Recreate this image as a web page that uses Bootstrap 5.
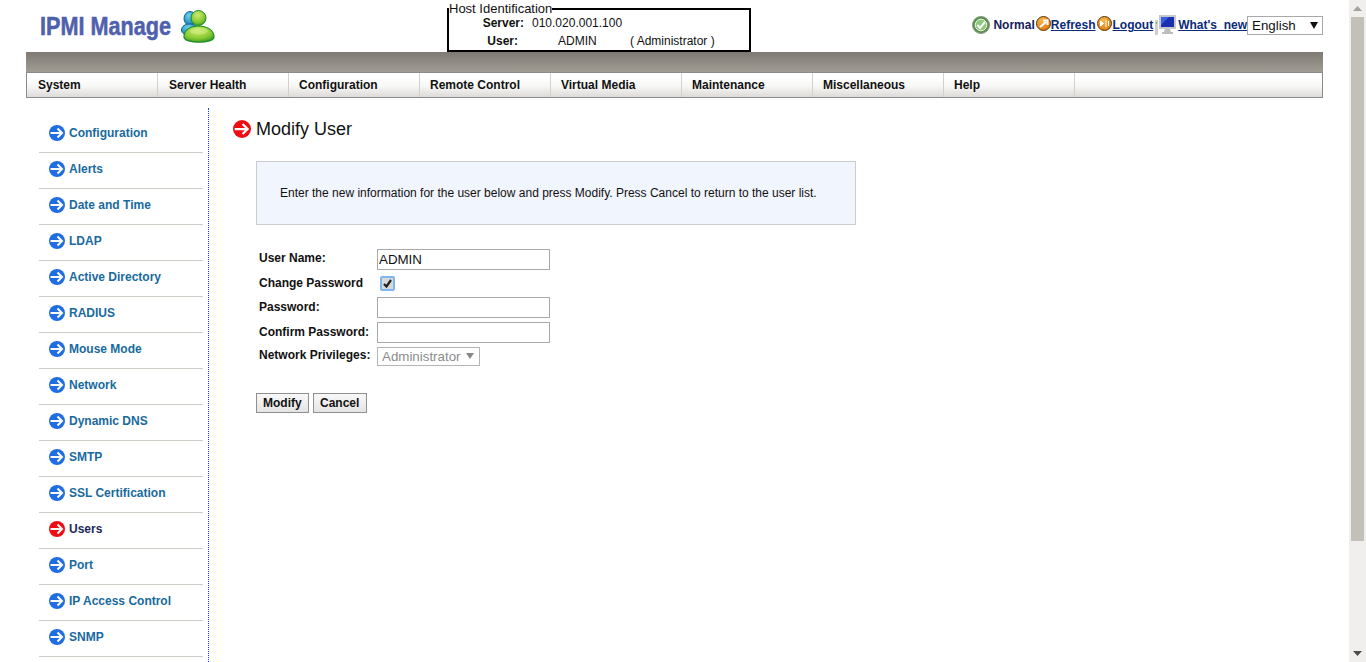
<!DOCTYPE html>
<html lang="en">
<head>
<meta charset="utf-8">
<title>IPMI Manage</title>
<link rel="stylesheet" href="https://cdn.jsdelivr.net/npm/bootstrap@5.3.0/dist/css/bootstrap.min.css">
<style>
html,body{height:100%;overflow:hidden}
body{font-family:"Liberation Sans",Arial,sans-serif;font-size:12px;color:#000;background:#fff}
.page-shell{height:662px;width:1366px}
.page-main{width:1349px;flex:none;overflow:hidden}
.fake-bar{width:17px;flex:none;background:#f0efed}
.bar-btn{height:17px;color:#a3a19b}
.bar-btn-down{color:#4d4d4d}
.bar-thumb{height:524px;width:13px;background:#c3c0b8;margin:0 auto}
.top-head{height:52px;padding-left:40px}
.brand-name{font-family:"Liberation Sans",Arial,sans-serif;font-weight:700;font-size:25px;color:#4f60ad;width:141px;white-space:nowrap;transform:scaleX(.865);transform-origin:left center;-webkit-text-stroke:.5px #4f60ad;margin-top:2px}
.brand-pic{width:34px;height:34px;margin-top:2px}
.host-box{width:304px;height:49px;margin:0 0 0 232px;padding:0;border:2px solid #000;min-width:0;align-self:flex-end}
.host-box legend{float:none;width:auto;margin:0;padding:0;font-size:13px;line-height:11px;color:#111}
.host-row{height:18px;line-height:18px;color:#111}
.host-k{font-weight:700;width:75px;text-align:right;flex:none}
.host-k-u{width:69px}
.host-v{margin-left:8px}
.host-u{margin-left:40px;width:72px;flex:none}
.tools{margin-left:auto;margin-right:26px;height:52px;padding-top:16px;font-weight:700;color:#14205c;white-space:nowrap}
.tools a{color:#0b2a78}
.tools svg{flex:none}
.tool-status{margin-right:3px}
.tool-ref{margin-left:1px}
.tool-out{margin-left:2px}
.tool-pc{margin:-1px 2px 0}
.lang-pick{appearance:none;width:76px;height:19px;border:1px solid #a9a9a9;background:#fff url("data:image/svg+xml,%3Csvg xmlns='http://www.w3.org/2000/svg' width='8' height='7'%3E%3Cpath d='M0 0h8L4 7z' fill='%23111'/%3E%3C/svg%3E") no-repeat 62px 5px;font:13.33px "Liberation Sans",Arial,sans-serif;padding:0 0 0 4px;color:#111;border-radius:0}
.band{height:20px;margin:0 0 0 26px;width:1297px;background:linear-gradient(#7e7a73,#a09d95)}
.menu-strip{height:26px;margin-left:26px;width:1297px;border:1px solid #8b8b8b;background:linear-gradient(#fff 20%,#f7f7f6 55%,#dcdbd8)}
.menu-strip .nav-link{width:131px;height:24px;padding:0 0 0 10px;line-height:24px;font-weight:700;color:#111;border-right:1px solid #d3d1cc;flex:none;font-size:12px}
.menu-strip .nav-link:nth-child(-n+2){padding-left:11px}
.content-row{height:564px}
.side-col{width:209px;flex:none;margin-top:10px;padding:9px 5px 0 39px;border-right:1px dotted #1a3cf0;height:554px;overflow:hidden}
.side-item{height:36px;width:164px;border-bottom:1px solid #cfccc6;padding-left:10px;font-weight:700;color:#186a9e;gap:4px;padding-bottom:4px}
.side-item.is-on{color:#1b2a58}
.main-col{padding:21px 0 0 24px}
.page-title{font-size:18px;font-weight:400;line-height:20px;margin:0;color:#111;gap:5px}
.note-box{margin:22px 0 0 23px;width:600px;height:64px;background:#f1f5fd;border:1px solid #ccc;padding-left:23px;color:#111}
.form-wrap{margin:22px 0 0 23px}
.f-row{height:24.5px;padding-left:3px}
.f-label{width:118px;flex:none;font-weight:700;color:#111;margin:0;padding-bottom:2px}
.f-input{width:173px;height:21px;border:1px solid #a9a9a9;padding:0 1px;font:13.33px "Liberation Sans",Arial,sans-serif;color:#111;border-radius:0;background:#fff}
.f-input-up{margin-bottom:2px}
.f-check{appearance:none;width:15px;height:15px;margin:0 0 1px 3px;border:2px solid #7fb6ee;border-radius:2px;background:#d8d8d8 url("data:image/svg+xml,%3Csvg xmlns='http://www.w3.org/2000/svg' width='11' height='11'%3E%3Cpath d='M2 6l2.500 2.500L9 2' fill='none' stroke='%23222' stroke-width='2.200'/%3E%3C/svg%3E") no-repeat center}
.f-drop{appearance:none;width:103px;height:19px;margin-bottom:2px;border:1px solid #b4b4b4;background:#fff url("data:image/svg+xml,%3Csvg xmlns='http://www.w3.org/2000/svg' width='8' height='6'%3E%3Cpath d='M0 0h8L4 6z' fill='%23888'/%3E%3C/svg%3E") no-repeat 88px 5px;font:13.33px "Liberation Sans",Arial,sans-serif;color:#8c8c8c;padding:0 0 0 4px;border-radius:0;opacity:1}
.f-row-last .f-label{padding-bottom:4px}
.act-row{margin-top:23px;gap:4px}
.act-btn{height:20px;padding:0 6px;font-weight:700;font-size:12px;line-height:18px;color:#111;border:1px solid #8f8f8f;border-radius:0;background:linear-gradient(#f8f8f8,#e4e4e4)}
.act-btn-wide{width:54px}
</style>
</head>
<body>
<svg width="0" height="0" class="d-block" aria-hidden="true">
  <defs>
    <symbol id="go-blue" viewBox="0 0 16 16"><circle cx="8" cy="8" r="8" fill="#1f6de0"/><path d="M1.500 8h11M8.500 3.500 13 8l-4.500 4.500" fill="none" stroke="#fff" stroke-width="2"/></symbol>
    <symbol id="go-red" viewBox="0 0 16 16"><circle cx="8" cy="8" r="8" fill="#ee0d12"/><path d="M1.500 8h11M8.500 3.500 13 8l-4.500 4.500" fill="none" stroke="#fff" stroke-width="2"/></symbol>
    <radialGradient id="g-green" cx=".45" cy=".3" r=".8"><stop offset="0" stop-color="#cdeb73"/><stop offset=".6" stop-color="#86c92e"/><stop offset="1" stop-color="#1f8a2a"/></radialGradient>
    <radialGradient id="g-blue" cx=".4" cy=".3" r=".8"><stop offset="0" stop-color="#6fd0ea"/><stop offset=".6" stop-color="#2a9ac8"/><stop offset="1" stop-color="#14608f"/></radialGradient>
    <radialGradient id="g-orange" cx=".4" cy=".3" r=".8"><stop offset="0" stop-color="#f8b84a"/><stop offset="1" stop-color="#dd7208"/></radialGradient>
  </defs>
</svg>
<div class="page-shell d-flex">
  <div class="page-main">
    <header class="top-head d-flex align-items-center">
      <div class="brand-name">IPMI Manage</div>
      <svg class="brand-pic" viewBox="0 0 34 34" aria-hidden="true">
        <ellipse cx="9" cy="8.500" rx="6" ry="7" fill="url(#g-blue)" stroke="#14608f"/>
        <path d="M.5 20c0-4 4-6 8-6s9 2 9 8c0 4-4 3.500-8 3.500S.5 24 .5 20z" fill="url(#g-blue)" stroke="#14608f"/>
        <ellipse cx="17.500" cy="8" rx="7.500" ry="7.500" fill="url(#g-green)" stroke="#1f8a2a"/>
        <path d="M3 27c0-7 6-11 14.500-11S33 20 33 27c0 7-30 7-30 0z" fill="url(#g-green)" stroke="#1f8a2a" stroke-width="1.200"/>
        <ellipse cx="18" cy="21" rx="9" ry="3.500" fill="#d6ef8a" opacity=".5"/>
      </svg>
      <fieldset class="host-box">
        <legend>Host Identification</legend>
        <div class="host-row d-flex"><span class="host-k">Server:</span><span class="host-v">010.020.001.100</span></div>
        <div class="host-row d-flex"><span class="host-k host-k-u">User:</span><span class="host-u">ADMIN</span><span>( Administrator )</span></div>
      </fieldset>
      <div class="tools d-flex align-items-start">
        <svg width="18" height="18" viewBox="0 0 18 18" class="tool-status" aria-hidden="true"><circle cx="9" cy="9" r="8.500" fill="#5b8f4d" stroke="#8a9a88"/><circle cx="9" cy="9" r="5.800" fill="#8cc97a" stroke="#eef5ea"/><path d="M5.500 9l2.500 3 5-6" fill="none" stroke="#fff" stroke-width="2"/></svg>
        <span>Normal</span>
        <svg width="15" height="15" viewBox="0 0 15 15" class="tool-ref" aria-hidden="true"><circle cx="7.500" cy="7.500" r="7" fill="url(#g-orange)" stroke="#5a3a10"/><path d="M4 11 10 6M7 4.500h4.500V9" fill="none" stroke="#fff" stroke-width="2"/></svg>
        <a href="#">Refresh</a>
        <svg width="15" height="15" viewBox="0 0 15 15" class="tool-out" aria-hidden="true"><circle cx="7.500" cy="7.500" r="7" fill="url(#g-orange)" stroke="#5a3a10"/><path d="M3.500 5l3 2.500-3 2.500zM9 3.500v8M11.500 5v5" fill="#fff" stroke="#fff"/></svg>
        <a href="#">Logout</a>
        <svg width="21" height="21" viewBox="0 0 21 21" class="tool-pc" aria-hidden="true"><rect x="0" y="5" width="3" height="15" fill="#cfcfcf"/><rect x="1" y="7" width="1" height="2" fill="#3fd06a"/><rect x="4" y="0" width="17" height="14" fill="#c4c8cc"/><rect x="6" y="2" width="13" height="10" fill="#1a2fb0"/><path d="M6 2h8l-8 8z" fill="#3a5fe0"/><path d="M10 14h5l1 3h2v2H7v-2h2z" fill="#bdbdbd"/></svg>
        <a href="#">What's&nbsp;&nbsp;new</a>
        <select class="lang-pick" aria-label="Language"><option>English</option></select>
      </div>
    </header>
    <div class="band"></div>
    <nav class="nav menu-strip flex-nowrap">
      <a class="nav-link" href="#">System</a>
      <a class="nav-link" href="#">Server Health</a>
      <a class="nav-link" href="#">Configuration</a>
      <a class="nav-link" href="#">Remote Control</a>
      <a class="nav-link" href="#">Virtual Media</a>
      <a class="nav-link" href="#">Maintenance</a>
      <a class="nav-link" href="#">Miscellaneous</a>
      <a class="nav-link" href="#">Help</a>
    </nav>
    <div class="content-row d-flex">
      <aside class="side-col">
        <div class="side-item d-flex align-items-center"><svg width="16" height="16"><use href="#go-blue"/></svg>Configuration</div>
        <div class="side-item d-flex align-items-center"><svg width="16" height="16"><use href="#go-blue"/></svg>Alerts</div>
        <div class="side-item d-flex align-items-center"><svg width="16" height="16"><use href="#go-blue"/></svg>Date and Time</div>
        <div class="side-item d-flex align-items-center"><svg width="16" height="16"><use href="#go-blue"/></svg>LDAP</div>
        <div class="side-item d-flex align-items-center"><svg width="16" height="16"><use href="#go-blue"/></svg>Active Directory</div>
        <div class="side-item d-flex align-items-center"><svg width="16" height="16"><use href="#go-blue"/></svg>RADIUS</div>
        <div class="side-item d-flex align-items-center"><svg width="16" height="16"><use href="#go-blue"/></svg>Mouse Mode</div>
        <div class="side-item d-flex align-items-center"><svg width="16" height="16"><use href="#go-blue"/></svg>Network</div>
        <div class="side-item d-flex align-items-center"><svg width="16" height="16"><use href="#go-blue"/></svg>Dynamic DNS</div>
        <div class="side-item d-flex align-items-center"><svg width="16" height="16"><use href="#go-blue"/></svg>SMTP</div>
        <div class="side-item d-flex align-items-center"><svg width="16" height="16"><use href="#go-blue"/></svg>SSL Certification</div>
        <div class="side-item is-on d-flex align-items-center"><svg width="16" height="16"><use href="#go-red"/></svg>Users</div>
        <div class="side-item d-flex align-items-center"><svg width="16" height="16"><use href="#go-blue"/></svg>Port</div>
        <div class="side-item d-flex align-items-center"><svg width="16" height="16"><use href="#go-blue"/></svg>IP Access Control</div>
        <div class="side-item d-flex align-items-center"><svg width="16" height="16"><use href="#go-blue"/></svg>SNMP</div>
      </aside>
      <main class="main-col flex-grow-1">
        <h1 class="page-title d-flex align-items-center"><svg width="18" height="18"><use href="#go-red"/></svg>Modify User</h1>
        <div class="note-box d-flex align-items-center">Enter the new information for the user below and press Modify. Press Cancel to return to the user list.</div>
        <form class="form-wrap">
          <div class="f-row d-flex align-items-center"><label class="f-label" for="u1">User Name:</label><input id="u1" class="f-input" type="text" value="ADMIN"></div>
          <div class="f-row d-flex align-items-center"><label class="f-label" for="u2">Change Password</label><input id="u2" class="f-check" type="checkbox" checked></div>
          <div class="f-row d-flex align-items-center"><label class="f-label" for="u3">Password:</label><input id="u3" class="f-input f-input-up" type="password"></div>
          <div class="f-row d-flex align-items-center"><label class="f-label" for="u4">Confirm Password:</label><input id="u4" class="f-input" type="password"></div>
          <div class="f-row f-row-last d-flex align-items-center"><label class="f-label" for="u5">Network Privileges:</label><select id="u5" class="f-drop"><option>Administrator</option></select></div>
          <div class="act-row d-flex"><button type="button" class="act-btn">Modify</button><button type="button" class="act-btn act-btn-wide">Cancel</button></div>
        </form>
      </main>
    </div>
  </div>
  <div class="fake-bar d-flex flex-column">
    <div class="bar-btn d-flex justify-content-center align-items-center"><svg width="9" height="5" viewBox="0 0 9 5"><path d="M0 5h9L4.500 0z" fill="currentColor"/></svg></div>
    <div class="bar-thumb"></div>
    <div class="flex-grow-1"></div>
    <div class="bar-btn bar-btn-down d-flex justify-content-center align-items-center"><svg width="9" height="5" viewBox="0 0 9 5"><path d="M0 0h9L4.500 5z" fill="currentColor"/></svg></div>
  </div>
</div>
<script src="https://cdn.jsdelivr.net/npm/bootstrap@5.3.0/dist/js/bootstrap.bundle.min.js"></script>
</body>
</html>
